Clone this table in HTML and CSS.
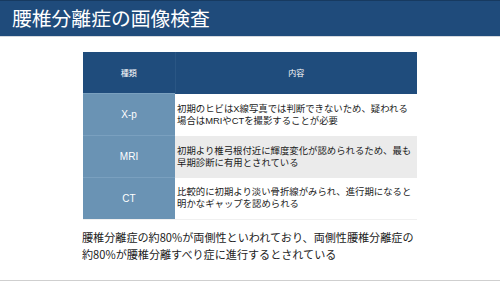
FILE: index.html
```html
<!DOCTYPE html>
<html lang="ja">
<head>
<meta charset="utf-8">
<link rel="stylesheet" href="styles.css">
</head>
<body>
<div class="slide">
  <header class="title-bar"><h1>腰椎分離症の画像検査</h1></header>
  <main class="content">
    <table class="exam">
      <thead>
        <tr><th class="c1">種類</th><th class="c2">内容</th></tr>
      </thead>
      <tbody>
        <tr><td class="c1">X-p</td><td class="c2"><span class="ln">初期のヒビはX線写真では判断できないため、疑われる</span><span class="ln">場合はMRIやCTを撮影することが必要</span></td></tr>
        <tr class="alt"><td class="c1">MRI</td><td class="c2"><span class="ln">初期より椎弓根付近に輝度変化が認められるため、最も</span><span class="ln">早期診断に有用とされている</span></td></tr>
        <tr><td class="c1">CT</td><td class="c2"><span class="ln">比較的に初期より淡い骨折線がみられ、進行期になると</span><span class="ln">明かなギャップを認められる</span></td></tr>
      </tbody>
    </table>
    <p class="note">腰椎分離症の約80%が両側性といわれており、両側性腰椎分離症の<br>約80%が腰椎分離すべり症に進行するとされている</p>
  </main>
</div>
</body>
</html>
```
FILE: styles.css
```css
html, body {
  margin: 0;
  padding: 0;
  background: #fff;
}
body {
  font-family: "Noto Sans CJK JP", "Noto Sans", sans-serif;
  color: #222;
}
.slide {
  width: 500px;
  height: 280px;
  border-bottom: 1px solid #cfcfcf;
  overflow: hidden;
}
.title-bar {
  background: #1f4b7b;
  border-top: 1px solid #173a60;
  border-bottom: 1px solid #d4d8de;
  box-sizing: border-box;
  height: 37px;
  display: flex;
  align-items: center;
  padding-left: 12px;
}
.title-bar h1 {
  margin: 0;
  font-size: 19.8px;
  font-weight: 400;
  color: #fff;
  line-height: 1;
  padding-bottom: 2px;
}
.content {
  padding: 15px 0 0 83px;
}
.exam {
  width: 334px;
  border-collapse: collapse;
  border-bottom: 1px solid #f0f0f0;
  font-family: "Liberation Sans", "Noto Sans CJK JP", sans-serif;
}
.exam th {
  background: #1f4c7c;
  color: #fff;
  font-weight: 400;
  font-size: 8px;
  height: 41px;
  padding: 0;
  text-align: center;
}
.exam th.c1 {
  border-right: 1px solid #2a5684;
}
.exam td {
  height: 41px;
  padding: 0;
  vertical-align: middle;
}
.exam td.c1 {
  width: 92px;
  background: #6a93b4;
  color: #fff;
  font-size: 10px;
  text-align: center;
  border-top: 1px solid #7aa0bf;
}
.exam td.c2 {
  font-size: 9.4px;
  padding-left: 2px;
  color: #1a1a1a;
}
.exam .ln {
  display: block;
  height: 12px;
  line-height: 12px;
  white-space: nowrap;
}
.exam tr.alt td.c2 {
  background: #ebebeb;
}
.note {
  margin: 9px 0 0 -1px;
  font-size: 11.1px;
  line-height: 16.5px;
  color: #222;
  white-space: nowrap;
}
```
